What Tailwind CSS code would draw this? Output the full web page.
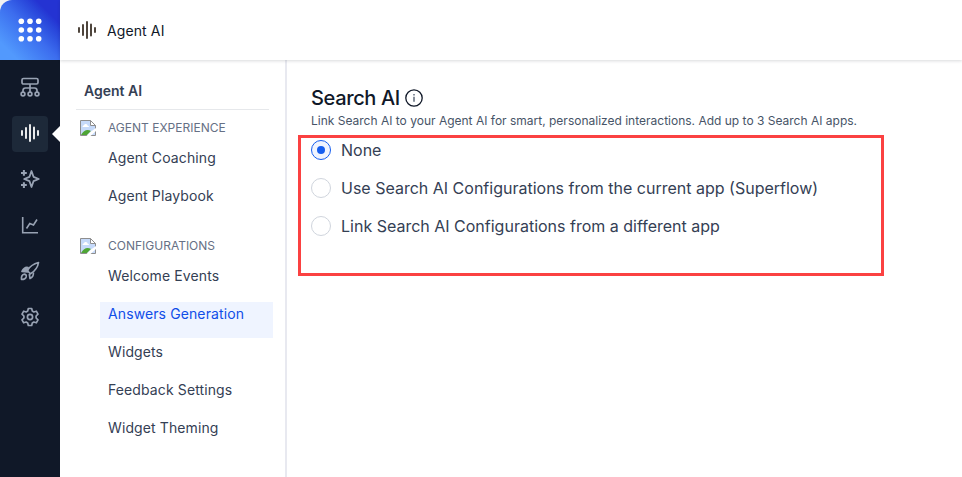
<!DOCTYPE html>
<html lang="en">
<head>
<meta charset="utf-8">
<title>Agent AI</title>
<script src="https://cdn.jsdelivr.net/npm/@tailwindcss/browser@4"></script>
</head>
<body class="h-[477px] w-[962px] overflow-hidden bg-white font-['Inter',sans-serif] text-[#344054]">
<svg class="hidden">
  <symbol id="broken" viewBox="0 0 16 16">
    <path d="M.5.5h10l5 5v10H.5z" fill="#c6dafa" stroke="#8e8e8e"/>
    <path d="M2.500 7Q2.500 5.500 4 5.300 4.500 3.500 6 4 7.500 4.200 7.500 5.500 9 5.500 9 7z" fill="#fff"/>
    <path d="M1 15Q4 10 7.500 10 9.500 10 11 11L7 15z" fill="#4fa535"/>
    <path d="M10.500.5v5h5z" fill="#fff" stroke="#8e8e8e"/>
    <path d="M6.500 16L11 11.500 16 8V11L10.500 16z" fill="#fff"/>
  </symbol>
  <symbol id="wave" viewBox="0 0 18 18">
    <path d="M1 7v4M5 4v10M9 1v16M13 3.500v11M17 7v4" fill="none" stroke="currentColor" stroke-width="1.800" stroke-linecap="round"/>
  </symbol>
</svg>
<div class="flex h-full">
  <aside class="flex w-[60px] shrink-0 flex-col bg-[#101828] text-[#98a2b3]">
    <div class="h-[60px] bg-[#f2f2f2]">
      <div class="flex size-[60px] items-center justify-center rounded-tl-[12px] bg-linear-45 from-[#5299fd] from-15% via-[#3c6cee] via-50% to-[#2433d2] to-80%">
        <svg class="size-6" viewBox="0 0 24 24" fill="#fff"><circle cx="3.300" cy="3.300" r="2.800"/><circle cx="12" cy="3.300" r="2.800"/><circle cx="20.700" cy="3.300" r="2.800"/><circle cx="3.300" cy="12" r="2.800"/><circle cx="12" cy="12" r="2.800"/><circle cx="20.700" cy="12" r="2.800"/><circle cx="3.300" cy="20.700" r="2.800"/><circle cx="12" cy="20.700" r="2.800"/><circle cx="20.700" cy="20.700" r="2.800"/></svg>
      </div>
    </div>
    <nav class="flex flex-col items-center gap-2.5 pt-[10px]">
      <div class="flex size-9 items-center justify-center"><svg class="mb-0.5 size-5" viewBox="0 0 20 20" fill="none" stroke="currentColor" stroke-width="1.700"><rect x="2" y="1.500" width="16" height="5.500" rx="1.500"/><path d="M10 7v8M3 15v-1.500q0-2.500 2.500-2.500h9q2.500 0 2.500 2.500V15"/><circle cx="3" cy="17" r="1.900"/><circle cx="10" cy="17" r="1.900"/><circle cx="17" cy="17" r="1.900"/></svg></div>
      <div class="relative flex size-9 items-center justify-center rounded-[4px] bg-[#1d2939] text-white"><svg class="mb-0.5 size-[18px]"><use href="#wave"/></svg>
        <svg class="absolute top-[10px] left-10 h-4 w-2" viewBox="0 0 8 16"><path d="M8 0v16L0 8z" fill="#fff"/></svg>
      </div>
      <div class="flex size-9 items-center justify-center"><svg class="mb-0.5 size-5" viewBox="0 0 20 20" fill="none" stroke="currentColor" stroke-width="1.800" stroke-linejoin="round"><path d="M11.500 2l2 5.800 5.300 2.200-5.300 2.200-2 5.800-2-5.800L4.200 10l5.300-2.200z"/><path d="M3.900 1v5.800M1 3.900h5.800M3.900 13.200V19M1 16.100h5.800" stroke-width="2"/></svg></div>
      <div class="flex size-9 items-center justify-center"><svg class="mb-0.5 size-5" viewBox="0 0 20 20" fill="none" stroke="currentColor" stroke-width="1.600"><path d="M2.700 2v15.800H18M6.500 13.500l3.300-5 3.700 1.500 3.500-5.500"/></svg></div>
      <div class="flex size-9 items-center justify-center"><svg class="mb-0.5 size-5" viewBox="0 0 20 20" fill="none" stroke="currentColor" stroke-width="1.700" stroke-linejoin="round"><path d="M7.200 9.500Q11 3.500 18.500 1.500 17.500 8.500 10.500 12.800z"/><path d="M8 6.500Q4.500 5.500 2 10.500l5.500.5z" fill="currentColor"/><path d="M13.300 11.500q.8 4-3.300 6l-.7-4.500M1.500 18.500q-.5-4.500 2.500-5.300 2.700.2 2.200 2.500-.7 2.600-4.700 2.800z"/></svg></div>
      <div class="flex size-9 items-center justify-center"><svg class="mb-0.5 size-5" viewBox="0 0 20 20" fill="none" stroke="currentColor" stroke-width="1.700" stroke-linejoin="round"><circle cx="10" cy="10" r="2.600"/><path d="M8.300 1.500h3.400l.6 2.600 1.500.9 2.500-.8 1.700 3-1.900 1.800v2l1.900 1.800-1.700 3-2.500-.8-1.500.9-.6 2.600H8.300l-.6-2.600-1.500-.9-2.500.8-1.700-3L3.900 11V9L2 7.200l1.700-3 2.500.8 1.500-.9z"/></svg></div>
    </nav>
  </aside>
  <div class="flex min-w-0 flex-1 flex-col">
    <header class="z-10 flex h-[60px] shrink-0 items-center gap-[11px] bg-white pl-[18px] text-[#101828] shadow-[0_1px_3px_rgba(16,24,40,0.16)]">
      <svg class="size-[18px] text-[#3c3128]"><use href="#wave"/></svg>
      <span class="pt-0.5 text-[14px] leading-5 tracking-[0.11px]">Agent AI</span>
    </header>
    <div class="flex min-h-0 flex-1">
      <aside class="w-[227px] shrink-0 border-r-2 border-[#e8e9f0] pr-3 pl-4">
        <h2 class="mr-1 h-[50px] border-b border-[#e6e8eb] pt-[21px] pl-2 text-[14px] leading-5 font-semibold">Agent AI</h2>
        <section class="pt-[8px] pl-1">
          <div class="flex h-[20px] items-center gap-3 text-[12px] text-[#667085]"><svg class="size-4"><use href="#broken"/></svg><span>AGENT EXPERIENCE</span></div>
          <ul class="mt-2 ml-5 flex flex-col gap-0.5 text-[14px] leading-6 tracking-[0.11px]">
            <li class="h-9 pl-2">Agent Coaching</li>
            <li class="h-9 pl-2">Agent Playbook</li>
          </ul>
        </section>
        <section class="pt-4 pl-1">
          <div class="flex h-[20px] items-center gap-3 text-[12px] text-[#667085]"><svg class="size-4"><use href="#broken"/></svg><span>CONFIGURATIONS</span></div>
          <ul class="mt-2 ml-5 flex flex-col gap-0.5 text-[14px] leading-6 tracking-[0.11px]">
            <li class="h-9 pl-2">Welcome Events</li>
            <li class="h-9 bg-[#eff4ff] pl-2 text-[#0f4ee8]">Answers Generation</li>
            <li class="h-9 pl-2">Widgets</li>
            <li class="h-9 pl-2">Feedback Settings</li>
            <li class="h-9 pl-2">Widget Theming</li>
          </ul>
        </section>
      </aside>
      <main class="flex-1 pt-[24px] pl-[11px]">
        <div class="flex h-[28px] items-center gap-[5px] pl-[13px] text-[#101828]">
          <h1 class="w-[89px] text-[20px] font-medium tracking-[-0.36px] whitespace-nowrap">Search AI</h1>
          <svg class="size-[18px]" viewBox="0 0 18 18" fill="none" stroke="currentColor" stroke-width="1.300"><circle cx="9" cy="9" r="8.200"/><path d="M9 7.800v5M9 5v1.500" stroke="#475467"/></svg>
        </div>
        <p class="h-[23px] pl-[13px] text-[12px] leading-[18px] text-[#475467]">Link Search AI to your Agent AI for smart, personalized interactions. Add up to 3 Search AI apps.</p>
        <div class="flex h-[141px] w-[586px] flex-col gap-[18px] border-[3px] border-[#fb4141] pt-0.5 pl-[10px] text-[16px] leading-5">
          <label class="flex h-5 items-center gap-[10px]"><span class="flex size-5 items-center justify-center rounded-full border border-[#155eef] bg-[#eff4ff]"><span class="size-2 rounded-full bg-[#155eef]"></span></span><span>None</span></label>
          <label class="flex h-5 items-center gap-[10px]"><span class="size-5 rounded-full border border-[#d0d5dd]"></span><span>Use Search AI Configurations from the current app (Superflow)</span></label>
          <label class="flex h-5 items-center gap-[10px]"><span class="size-5 rounded-full border border-[#d0d5dd]"></span><span>Link Search AI Configurations from a different app</span></label>
        </div>
      </main>
    </div>
  </div>
</div>
</body>
</html>
